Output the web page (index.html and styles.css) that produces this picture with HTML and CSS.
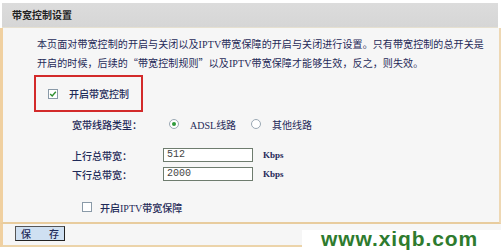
FILE: index.html
```html
<!DOCTYPE html>
<html lang="zh-CN">
<head>
<meta charset="utf-8">
<link rel="stylesheet" href="styles.css">
</head>
<body>
<div class="panel">
  <div class="hdr">带宽控制设置</div>
  <div class="main">
    <p class="desc">本页面对带宽控制的开启与关闭以及<span class="lat">IPTV</span>带宽保障的开启与关闭进行设置。只有带宽控制的总开关是<br>开启的时候，后续的“带宽控制规则”以及<span class="lat">IPTV</span>带宽保障才能够生效，反之，则失效。</p>
    <div class="hl">
      <span class="cb on"><svg viewBox="0 0 10 10" width="10" height="10"><path d="M2.2 5 L4.2 7 L7.8 2.8" fill="none" stroke="#2f8f2f" stroke-width="1.4"/></svg></span>
      <span class="lbl">开启带宽控制</span>
    </div>
    <div class="row type">
      <span class="key">宽带线路类型：</span>
      <span class="radio on"></span><span class="opt"><span class="lat">ADSL</span>线路</span>
      <span class="radio"></span><span class="opt">其他线路</span>
    </div>
    <div class="row bw first">
      <span class="key">上行总带宽：</span>
      <span class="inp">512</span>
      <span class="unit">Kbps</span>
    </div>
    <div class="row bw">
      <span class="key">下行总带宽：</span>
      <span class="inp">2000</span>
      <span class="unit">Kbps</span>
    </div>
    <div class="row iptv">
      <span class="cb"></span>
      <span class="lbl">开启<span class="lat">IPTV</span>带宽保障</span>
    </div>
  </div>
  <div class="foot">
    <span class="btn">保&nbsp;存</span>
  </div>
  <div class="wm"><span class="wmt">www.xiqb.com</span></div>
</div>
</body>
</html>
```
FILE: styles.css
```css
html, body {
  margin: 0;
  padding: 0;
  background: #ffffff;
}
body {
  font-family: "Noto Sans CJK SC", "Noto Sans", sans-serif;
  font-size: 10px;
  color: #1f2a58;
  width: 504px;
  height: 250px;
  overflow: hidden;
}
.panel {
  position: relative;
  width: 501px;
  height: 250px;
}
.hdr {
  margin: 3px 3px 0 2px;
  height: 25px;
  line-height: 23px;
  padding-left: 10px;
  background: linear-gradient(#dcdcdc, #d6d6d6);
  color: #222;
  font-size: 10px;
  font-weight: 700;
  border-bottom: 1px solid #e6e0d0;
  box-sizing: border-box;
}
.main {
  background: #f6f6f6;
  border-left: 3px solid #f0d0a0;
  border-right: 2px solid #eed8b4;
  border-bottom: 2px solid #e8cc9e;
  height: 196px;
  box-sizing: border-box;
  padding-top: 7px;
}
.lat {
  font-family: "Liberation Serif", serif;
  font-size: 10px;
}
.desc {
  margin: 0;
  padding-left: 34px;
  line-height: 18px;
  white-space: nowrap;
  letter-spacing: 0.1px;
}
.hl {
  margin: 2px 0 0 31px;
  width: 109px;
  height: 37px;
  border: 2px solid #d32a2a;
  display: flex;
  align-items: center;
  box-sizing: border-box;
  padding-left: 12px;
}
.cb {
  width: 10px;
  height: 10px;
  box-sizing: border-box;
  border: 1px solid #8a9aa8;
  background: #fff;
  display: inline-flex;
}
.cb svg { display: block; margin: -1px; }
.lbl {
  margin-left: 10px;
  font-weight: 500;
}
.hl .lbl { margin-left: 11px; }
.row {
  display: flex;
  align-items: center;
  padding-left: 69px;
  height: 14px;
}
.key {
  width: 93px;
  font-weight: 500;
}
.type { margin-top: 5px; }
.radio {
  width: 10px;
  height: 10px;
  border-radius: 50%;
  border: 1px solid #9aa8b4;
  background: #fff;
  box-sizing: border-box;
  display: inline-flex;
  align-items: center;
  justify-content: center;
  margin-left: 4px;
}
.radio.on::after {
  content: "";
  width: 4px;
  height: 4px;
  border-radius: 50%;
  background: #2f9a3a;
}
.opt { margin-left: 11px; width: 57px; }
.bw .inp {
  width: 90px;
  height: 14px;
  box-sizing: border-box;
  border: 1px solid #6e7c6e;
  background: #fff;
  font-family: "Liberation Mono", monospace;
  font-size: 10px;
  color: #444;
  line-height: 12px;
  padding-left: 3px;
}
.bw .key { width: 91px; }
.unit {
  margin-left: 10px;
  font-family: "Liberation Serif", serif;
  font-size: 9px;
  font-weight: 700;
}
.first { margin-top: 17px; }
.bw + .bw { margin-top: 5px; }
.iptv {
  margin-top: 19px;
  padding-left: 79px;
}
.iptv .lbl { margin-left: 8px; }
.foot {
  height: 23px;
  background: #f6f6f6;
  border-left: 3px solid #f0d0a0;
  border-bottom: 2px solid #ecd4aa;
  box-sizing: border-box;
  padding: 2px 0 0 12px;
}
.btn {
  display: inline-flex;
  align-items: center;
  justify-content: center;
  width: 50px;
  height: 15px;
  box-sizing: border-box;
  background: #cfe0f2;
  border: 1px solid #555;
  border-right-color: #222;
  border-bottom-color: #222;
  color: #1f2a58;
  font-size: 10px;
  letter-spacing: 8px;
  padding-left: 8px;
  font-weight: 500;
}
.wm {
  position: absolute;
  left: 302px;
  top: 227px;
  width: 202px;
  height: 23px;
  background: #fff;
  padding-left: 19px;
  box-sizing: border-box;
}
.wmt {
  display: block;
  color: #2e7b2e;
  font-family: "Liberation Sans", Arial, sans-serif;
  font-weight: 700;
  font-size: 21px;
  line-height: 18px;
  letter-spacing: 0.9px;
}
```
